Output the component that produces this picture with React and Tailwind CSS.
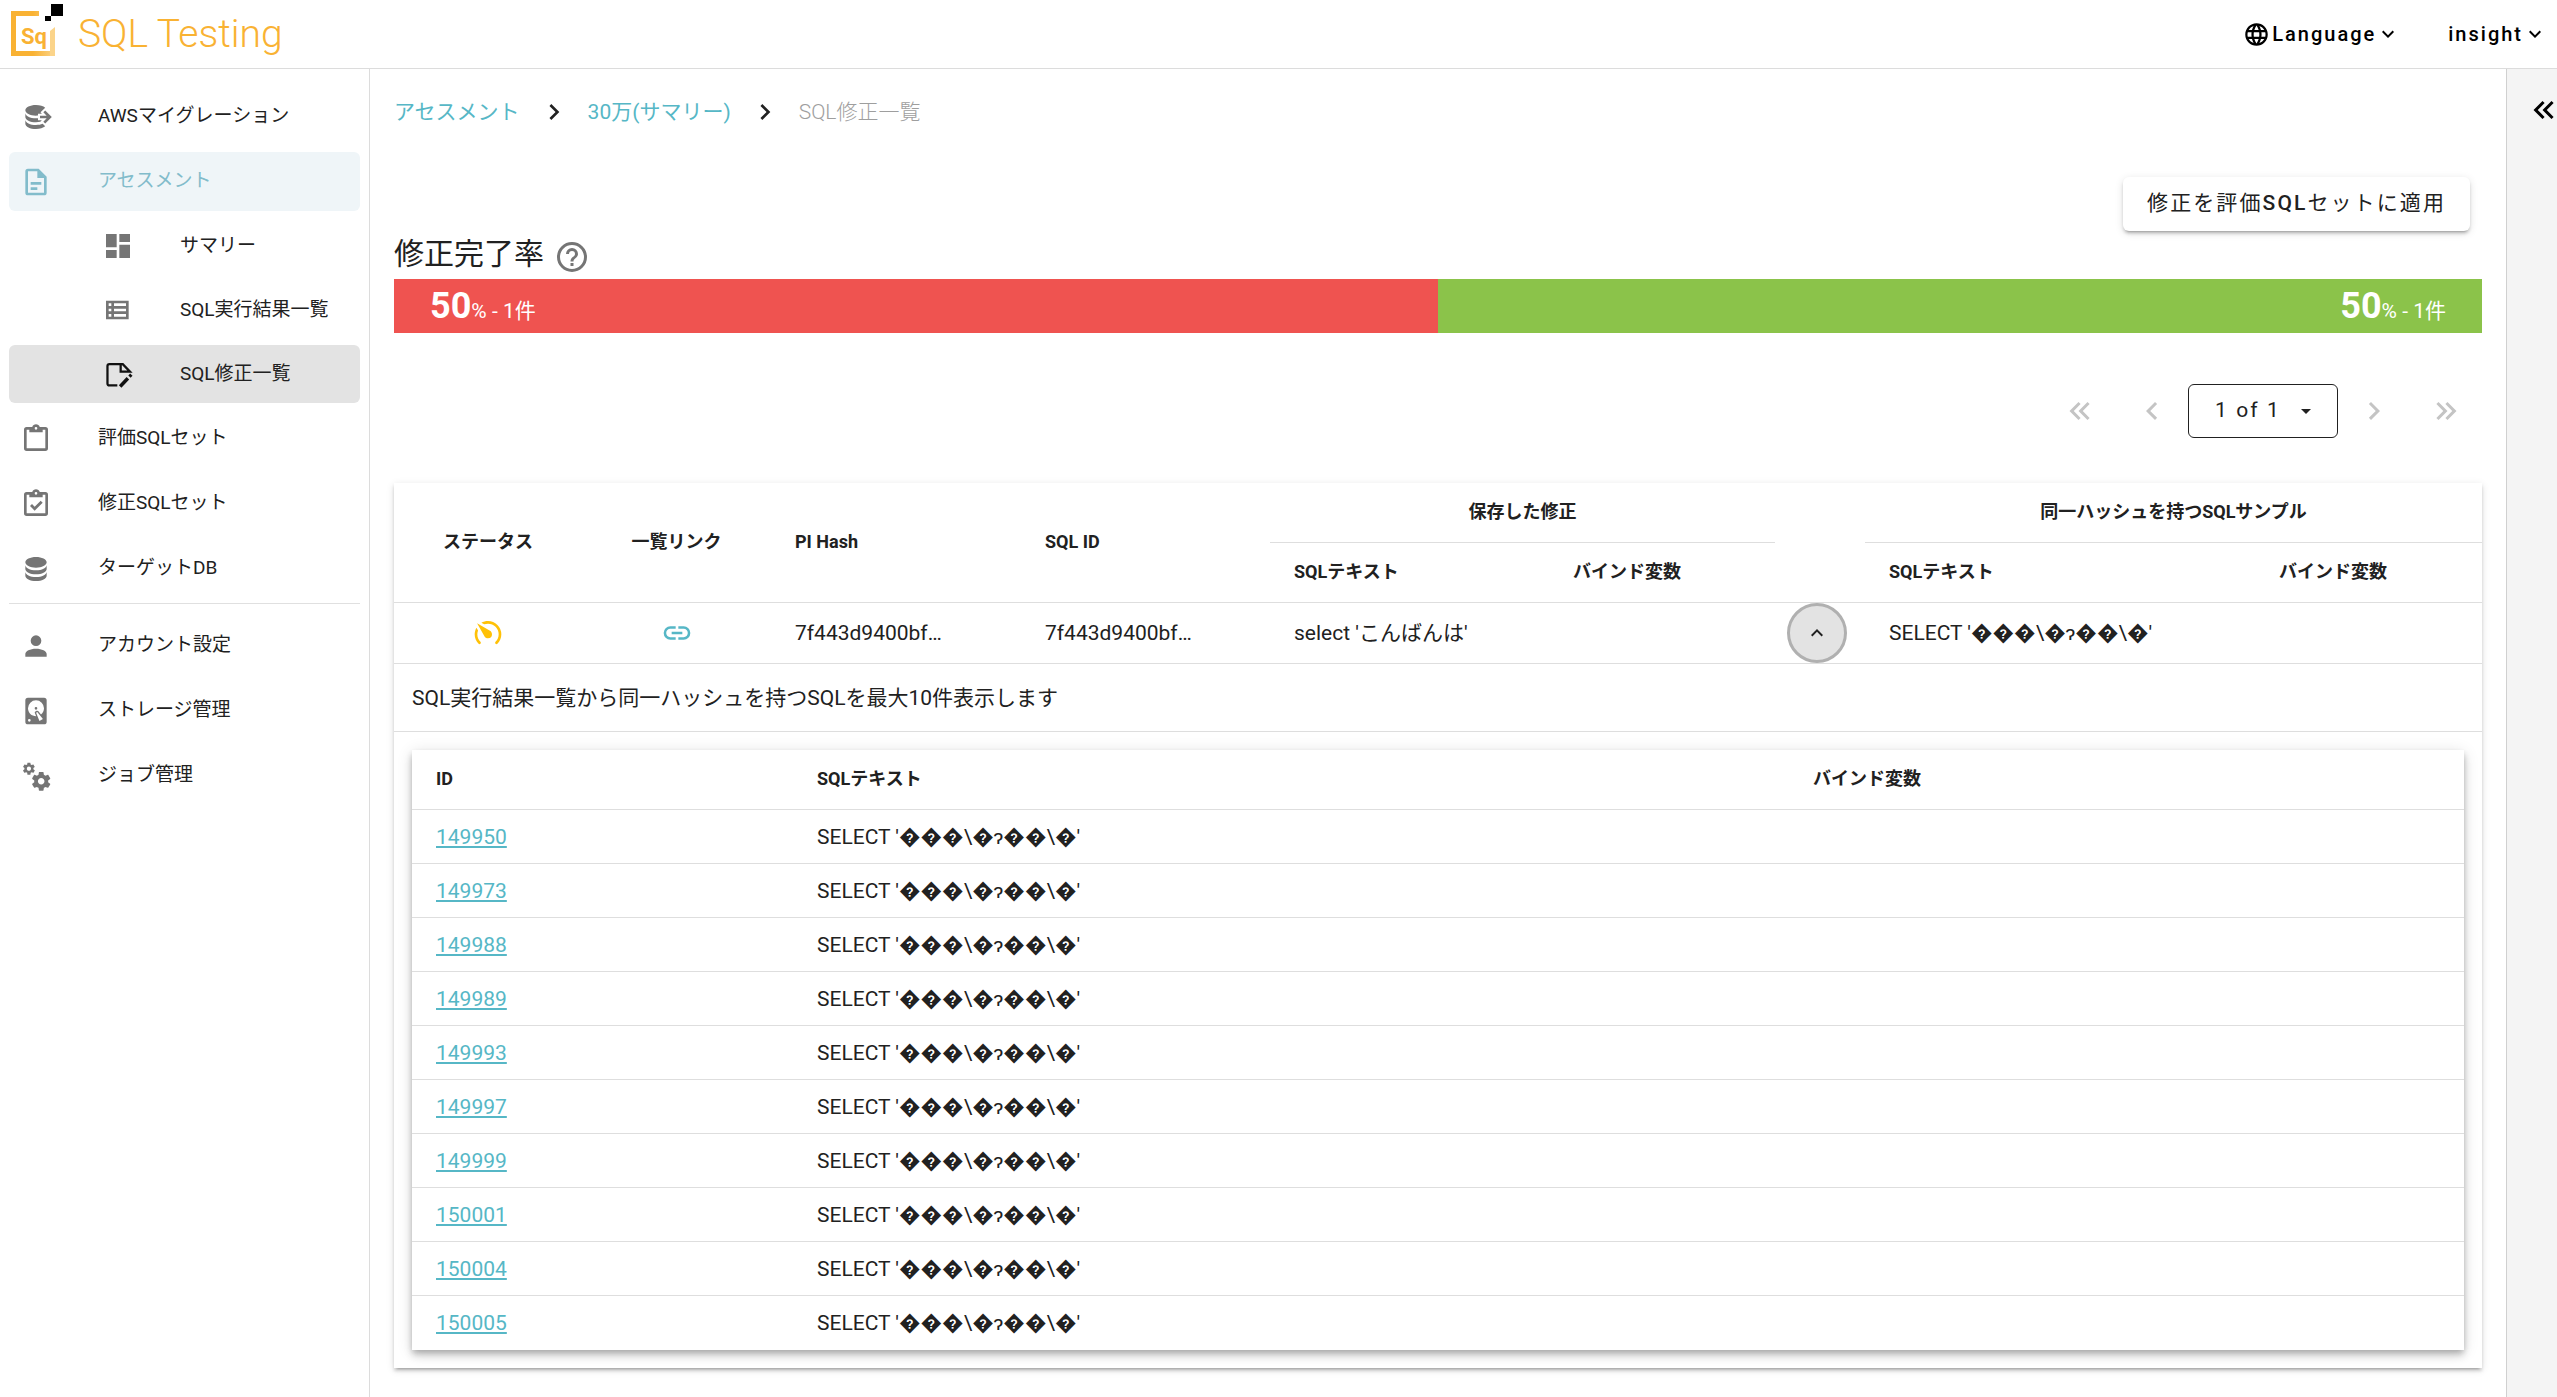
import React from "react";

const PATHS = {
  databaseExport:
    "M12 3C7.58 3 4 4.79 4 7C4 9.21 7.58 11 12 11C12.5 11 13 10.97 13.5 10.92V9.5H16.39L15.39 8.5L18.9 5C17.5 3.8 14.94 3 12 3M18.92 7.08L17.5 8.5L20 11H15V13H20L17.5 15.5L18.92 16.92L23.84 12M4 9V12C4 14.21 7.58 16 12 16C13.17 16 14.26 15.85 15.25 15.63L16.38 14.5H13.5V12.92C13 12.97 12.5 13 12 13C7.58 13 4 11.21 4 9M4 14V17C4 19.21 7.58 21 12 21C14.94 21 17.5 20.2 18.9 19L17 17.1C15.61 17.66 13.9 18 12 18C7.58 18 4 16.21 4 14Z",
  fileDocument:
    "M6,2A2,2 0 0,0 4,4V20A2,2 0 0,0 6,22H18A2,2 0 0,0 20,20V8L14,2H6M6,4H13V9H18V20H6V4M8,12V14H16V12H8M8,16V18H13V16H8Z",
  dashboard: "M13,3V9H21V3M13,21H21V11H13M3,21H11V15H3M3,13H11V3H3V13Z",
  viewList:
    "M3 5V19H20V5H3M7 7V9H5V7H7M5 13V11H7V13H5M5 15H7V17H5V15M18 17H9V15H18V17M18 13H9V11H18V13M18 9H9V7H18V9Z",
  clipboard:
    "M19,3H14.82C14.4,1.84 13.3,1 12,1C10.7,1 9.6,1.84 9.18,3H5A2,2 0 0,0 3,5V19A2,2 0 0,0 5,21H19A2,2 0 0,0 21,19V5A2,2 0 0,0 19,3M12,3A1,1 0 0,1 13,4A1,1 0 0,1 12,5A1,1 0 0,1 11,4A1,1 0 0,1 12,3M7,7H17V5H19V19H5V5H7V7Z",
  clipboardCheck:
    "M19,3H14.82C14.4,1.84 13.3,1 12,1C10.7,1 9.6,1.84 9.18,3H5A2,2 0 0,0 3,5V19A2,2 0 0,0 5,21H19A2,2 0 0,0 21,19V5A2,2 0 0,0 19,3M12,3A1,1 0 0,1 13,4A1,1 0 0,1 12,5A1,1 0 0,1 11,4A1,1 0 0,1 12,3M7,7H17V5H19V19H5V5H7V7M7.5,13.5L9,12L11,14L15.5,9.5L17,11L11,17L7.5,13.5Z",
  database:
    "M12,3C7.58,3 4,4.79 4,7C4,9.21 7.58,11 12,11C16.42,11 20,9.21 20,7C20,4.79 16.42,3 12,3M4,9V12C4,14.21 7.58,16 12,16C16.42,16 20,14.21 20,12V9C20,11.21 16.42,13 12,13C7.58,13 4,11.21 4,9M4,14V17C4,19.21 7.58,21 12,21C16.42,21 20,19.21 20,17V14C20,16.21 16.42,18 12,18C7.58,18 4,16.21 4,14Z",
  account:
    "M12,4A4,4 0 0,1 16,8A4,4 0 0,1 12,12A4,4 0 0,1 8,8A4,4 0 0,1 12,4M12,14C16.42,14 20,15.79 20,18V20H4V18C4,15.79 7.58,14 12,14Z",
  harddisk:
    "M6,2H18A2,2 0 0,1 20,4V20A2,2 0 0,1 18,22H6A2,2 0 0,1 4,20V4A2,2 0 0,1 6,2M12,4A6,6 0 0,0 6,10C6,13.31 8.69,16 12.1,16L11.22,13.77C10.95,13.29 11.11,12.68 11.59,12.4L12.45,11.9C12.93,11.63 13.54,11.79 13.82,12.27L15.74,14.69C17.12,13.59 18,11.9 18,10A6,6 0 0,0 12,4M12,9A1,1 0 0,1 13,10A1,1 0 0,1 12,11A1,1 0 0,1 11,10A1,1 0 0,1 12,9M7,18A1,1 0 0,0 6,19A1,1 0 0,0 7,20A1,1 0 0,0 8,19A1,1 0 0,0 7,18M12.09,13.27L14.58,19.58L17.17,18.08L12.95,12.77L12.09,13.27Z",
  cogs: "M15.9,18.45C17.25,18.45 18.35,17.35 18.35,16C18.35,14.65 17.25,13.55 15.9,13.55C14.54,13.55 13.45,14.65 13.45,16C13.45,17.35 14.54,18.45 15.9,18.45M21.1,16.68L22.58,17.84C22.71,17.95 22.75,18.13 22.66,18.29L21.26,20.71C21.17,20.86 21,20.92 20.83,20.86L19.09,20.16C18.73,20.44 18.33,20.67 17.91,20.85L17.64,22.7C17.62,22.87 17.47,23 17.3,23H14.5C14.32,23 14.18,22.87 14.15,22.7L13.89,20.85C13.46,20.67 13.07,20.44 12.71,20.16L10.96,20.86C10.81,20.92 10.62,20.86 10.54,20.71L9.14,18.29C9.05,18.13 9.09,17.95 9.22,17.84L10.7,16.68L10.65,16L10.7,15.31L9.22,14.16C9.09,14.05 9.05,13.86 9.14,13.71L10.54,11.29C10.62,11.13 10.81,11.07 10.96,11.13L12.71,11.84C13.07,11.56 13.46,11.32 13.89,11.15L14.15,9.29C14.18,9.13 14.32,9 14.5,9H17.3C17.47,9 17.62,9.13 17.64,9.29L17.91,11.15C18.33,11.32 18.73,11.56 19.09,11.84L20.83,11.13C21,11.07 21.17,11.13 21.26,11.29L22.66,13.71C22.75,13.86 22.71,14.05 22.58,14.16L21.1,15.31L21.15,16L21.1,16.68M6.69,8.07C7.56,8.07 8.26,7.37 8.26,6.5C8.26,5.63 7.56,4.92 6.69,4.92A1.58,1.58 0 0,0 5.11,6.5C5.11,7.37 5.82,8.07 6.69,8.07M10.03,6.94L11,7.68C11.07,7.75 11.09,7.87 11.03,7.97L10.13,9.53C10.08,9.63 9.96,9.67 9.86,9.63L8.74,9.18L8,9.62L7.81,10.81C7.79,10.92 7.7,11 7.59,11H5.79C5.67,11 5.58,10.92 5.56,10.81L5.4,9.62L4.64,9.18L3.52,9.63C3.41,9.67 3.3,9.63 3.24,9.53L2.34,7.97C2.28,7.87 2.31,7.75 2.39,7.68L3.34,6.94L3.31,6.5L3.34,6.06L2.39,5.32C2.31,5.25 2.28,5.13 2.34,5.03L3.24,3.47C3.3,3.37 3.41,3.32 3.52,3.36L4.63,3.82L5.4,3.38L5.56,2.19C5.58,2.08 5.67,2 5.79,2H7.59C7.7,2 7.79,2.08 7.81,2.19L8,3.38L8.74,3.82L9.86,3.36C9.96,3.32 10.08,3.37 10.13,3.47L11.03,5.03C11.09,5.13 11.07,5.25 11,5.32L10.03,6.06L10.06,6.5L10.03,6.94Z",
  web: "M16.36,14C16.44,13.34 16.5,12.68 16.5,12C16.5,11.32 16.44,10.66 16.36,10H19.74C19.9,10.64 20,11.31 20,12C20,12.69 19.9,13.36 19.74,14M14.59,19.56C15.19,18.45 15.65,17.25 15.97,16H18.92C17.96,17.65 16.43,18.93 14.59,19.56M14.34,14H9.66C9.56,13.34 9.5,12.68 9.5,12C9.5,11.32 9.56,10.65 9.66,10H14.34C14.43,10.65 14.5,11.32 14.5,12C14.5,12.68 14.43,13.34 14.34,14M12,19.96C11.17,18.76 10.5,17.43 10.09,16H13.91C13.5,17.43 12.83,18.76 12,19.96M8,8H5.08C6.03,6.34 7.57,5.06 9.4,4.44C8.8,5.55 8.35,6.75 8,8M5.08,16H8C8.35,17.25 8.8,18.45 9.4,19.56C7.57,18.93 6.03,17.65 5.08,16M4.26,14C4.1,13.36 4,12.69 4,12C4,11.31 4.1,10.64 4.26,10H7.64C7.56,10.66 7.5,11.32 7.5,12C7.5,12.68 7.56,13.34 7.64,14M12,4.03C12.83,5.23 13.5,6.57 13.91,8H10.09C10.5,6.57 11.17,5.23 12,4.03M18.92,8H15.97C15.65,6.75 15.19,5.55 14.59,4.44C16.43,5.07 17.96,6.34 18.92,8M12,2C6.47,2 2,6.5 2,12A10,10 0 0,0 12,22A10,10 0 0,0 22,12A10,10 0 0,0 12,2Z",
  help: "M11,18H13V16H11V18M12,2A10,10 0 0,0 2,12A10,10 0 0,0 12,22A10,10 0 0,0 22,12A10,10 0 0,0 12,2M12,20C7.59,20 4,16.41 4,12C4,7.59 7.59,4 12,4C16.41,4 20,7.59 20,12C20,16.41 16.41,20 12,20M12,6A4,4 0 0,0 8,10H10A2,2 0 0,1 12,8A2,2 0 0,1 14,10C14,12 11,11.75 11,15H13C13,12.75 16,12.5 16,10A4,4 0 0,0 12,6Z",
  link: "M3.9,12C3.9,10.29 5.29,8.9 7,8.9H11V7H7A5,5 0 0,0 2,12A5,5 0 0,0 7,17H11V15.1H7C5.29,15.1 3.9,13.71 3.9,12M8,13H16V11H8V13M17,7H13V8.9H17C18.71,8.9 20.1,10.29 20.1,12C20.1,13.71 18.71,15.1 17,15.1H13V17H17A5,5 0 0,0 22,12A5,5 0 0,0 17,7Z",
  chevronLeft: "M15.41,16.58L10.83,12L15.41,7.41L14,6L8,12L14,18L15.41,16.58Z",
  chevronRight: "M8.59,16.58L13.17,12L8.59,7.41L10,6L16,12L10,18L8.59,16.58Z",
  chevronDown: "M7.41,8.58L12,13.17L16.59,8.58L18,10L12,16L6,10L7.41,8.58Z",
  chevronUp: "M7.41,15.41L12,10.83L16.59,15.41L18,14L12,8L6,14L7.41,15.41Z",
  doubleLeft:
    "M18.41,7.41L17,6L11,12L17,18L18.41,16.59L13.83,12L18.41,7.41M12.41,7.41L11,6L5,12L11,18L12.41,16.59L7.83,12L12.41,7.41Z",
  doubleRight:
    "M5.59,7.41L7,6L13,12L7,18L5.59,16.59L10.17,12L5.59,7.41M11.59,7.41L13,6L19,12L13,18L11.59,16.59L16.17,12L11.59,7.41Z",
  menuDown: "M7,10L12,15L17,10H7Z",
};

function Icon({ name, className }) {
  return (
    <svg viewBox="0 0 24 24" fill="currentColor" aria-hidden="true" className={className}>
      <path d={PATHS[name]} />
    </svg>
  );
}

function FileEditIcon({ className }) {
  return (
    <svg viewBox="0 0 24 24" fill="none" stroke="currentColor" strokeWidth="1.7" aria-hidden="true" className={className}>
      <path d="M11.5 20.6H5.6C4.7 20.6 4.1 20 4.1 19.1V6C4.1 5.2 4.7 4.6 5.6 4.6H15.6L21 10.3H14V4.6" />
      <path d="M13.6 21.4L19.4 15.2" strokeWidth="2.6" />
      <path d="M20.6 14L22 12.5" strokeWidth="2.4" />
    </svg>
  );
}

function SpeedometerIcon({ className }) {
  return (
    <svg viewBox="0 0 24 24" fill="currentColor" aria-hidden="true" className={className}>
      <path
        transform="matrix(-1 0 0 1 24 0)"
        d="M12,16A3,3 0 0,1 9,13C9,11.88 9.61,10.9 10.5,10.39L20.21,4.77L14.68,14.35C14.18,15.33 13.17,16 12,16M12,3C13.81,3 15.5,3.5 16.97,4.32L14.87,5.53C14,5.19 13,5 12,5A8,8 0 0,0 4,13C4,15.21 4.89,17.21 6.34,18.65H6.35C6.74,19.04 6.74,19.67 6.35,20.06C5.96,20.45 5.32,20.45 4.93,20.07V20.07C3.12,18.26 2,15.76 2,13A10,10 0 0,1 12,3M22,13C22,15.76 20.88,18.26 19.07,20.07V20.07C18.68,20.45 18.05,20.45 17.66,20.06C17.27,19.67 17.27,19.04 17.66,18.65V18.65C19.11,17.2 20,15.21 20,13C20,12 19.81,11 19.46,10.1L20.67,8C21.5,9.5 22,11.18 22,13Z"
      />
    </svg>
  );
}

function Logo() {
  return (
    <a href="#" className="flex items-center gap-[13px] text-[#f9b233]">
      <svg viewBox="0 0 54 54" className="h-[54px] w-[54px]" role="img" aria-label="Sq">
        <defs>
          <linearGradient id="fade" x1="0" y1="0" x2="1" y2="0">
            <stop offset="0.5" stopColor="#f9b233" />
            <stop offset="1" stopColor="#fbd48a" />
          </linearGradient>
        </defs>
        <path d="M0 8H28V13H5V48H44V53H0Z" fill="url(#fade)" />
        <path d="M39 28L44 24V53H39Z" fill="#fbd48a" />
        <text x="10" y="41" fontSize="22" fontWeight="700" fontFamily="Roboto, sans-serif" fill="#f9b233">
          Sq
        </text>
        <rect x="40" y="1" width="12" height="12" fill="#000" />
        <rect x="34" y="13" width="6" height="5" fill="#000" />
      </svg>
      <span className="pt-2 text-[39px] leading-[54px] font-light">SQL Testing</span>
    </a>
  );
}

function NavItem({ icon, label, state }) {
  const tone =
    state === "active" ? "bg-[#eff5f8] text-[#82bccb]" : "text-[#757575]";
  const text = state === "active" ? "text-[#82bccb]" : "text-[#212121]";
  return (
    <li>
      <a href="#" className={"flex h-[59px] items-center rounded-md pl-[11px] " + tone}>
        <Icon name={icon} className="h-8 w-8 shrink-0" />
        <span className={"ml-[46px] text-[19px] " + text}>{label}</span>
      </a>
    </li>
  );
}

function SubItem({ children, label, selected }) {
  return (
    <li>
      <a
        href="#"
        className={
          "flex h-[58px] items-center rounded-md pl-[93px] " +
          (selected ? "bg-[#e3e3e3] text-[#111111]" : "text-[#757575]")
        }
      >
        {children}
        <span className="ml-[46px] text-[19px] text-[#212121]">{label}</span>
      </a>
    </li>
  );
}

function Sidebar() {
  return (
    <nav className="w-[370px] shrink-0 border-r border-[#dcdcdc] px-[9px] py-[18px]">
      <ul className="flex flex-col gap-[6px]">
        <NavItem icon="databaseExport" label="AWSマイグレーション" />
        <NavItem icon="fileDocument" label="アセスメント" state="active" />
        <SubItem label="サマリー">
          <Icon name="dashboard" className="h-8 w-8 shrink-0" />
        </SubItem>
        <SubItem label="SQL実行結果一覧">
          <Icon name="viewList" className="h-8 w-8 shrink-0" />
        </SubItem>
        <SubItem label="SQL修正一覧" selected>
          <FileEditIcon className="h-8 w-8 shrink-0" />
        </SubItem>
        <NavItem icon="clipboard" label="評価SQLセット" />
        <NavItem icon="clipboardCheck" label="修正SQLセット" />
        <NavItem icon="database" label="ターゲットDB" />
      </ul>
      <hr className="mt-[5px] mb-3 border-[#e0e0e0]" />
      <ul className="flex flex-col gap-[6px]">
        <NavItem icon="account" label="アカウント設定" />
        <NavItem icon="harddisk" label="ストレージ管理" />
        <NavItem icon="cogs" label="ジョブ管理" />
      </ul>
    </nav>
  );
}

function Breadcrumb() {
  const separator = (
    <li aria-hidden="true" className="flex w-[68px] justify-center">
      <Icon name="chevronRight" className="h-8 w-8" />
    </li>
  );
  return (
    <ol className="flex items-center text-[21px] leading-8">
      <li><a href="#" className="text-[#56b7c6]">アセスメント</a></li>
      {separator}
      <li><a href="#" className="text-[#56b7c6]">30万(サマリー)</a></li>
      {separator}
      <li className="font-light text-[#9e9e9e]">SQL修正一覧</li>
    </ol>
  );
}

function Pagination() {
  const step = "flex h-[54px] w-[72px] items-center justify-center text-[#c4c4c4]";
  return (
    <div className="mt-[51px] flex items-center justify-end">
      <button type="button" aria-label="最初のページ" className={step}><Icon name="doubleLeft" className="h-9 w-9" /></button>
      <button type="button" aria-label="前のページ" className={step}><Icon name="chevronLeft" className="h-9 w-9" /></button>
      <div className="relative">
        <select
          aria-label="ページ"
          className="h-[54px] w-[150px] appearance-none rounded-md border border-[#212121] bg-white pl-[26px] text-[21px] tracking-widest"
        >
          <option>1 of 1</option>
        </select>
        <Icon name="menuDown" className="pointer-events-none absolute top-[15px] right-5 h-6 w-6" />
      </div>
      <button type="button" aria-label="次のページ" className={step}><Icon name="chevronRight" className="h-9 w-9" /></button>
      <button type="button" aria-label="最後のページ" className={step}><Icon name="doubleRight" className="h-9 w-9" /></button>
    </div>
  );
}

const IDS = ["149950", "149973", "149988", "149989", "149993", "149997", "149999", "150001", "150004", "150005"];
const SAMPLE = "SELECT '\uFFFD\uFFFD\uFFFD\\\uFFFD\u0242\uFFFD\uFFFD\\\uFFFD'";

function SampleTable() {
  return (
    <div className="m-[18px] bg-white shadow-[0_3px_6px_-1px_rgba(0,0,0,0.2),0_6px_8px_rgba(0,0,0,0.14),0_2px_15px_rgba(0,0,0,0.12)]">
      <table className="w-full table-fixed text-left">
        <colgroup>
          <col className="w-[381px]" />
          <col />
          <col className="w-[675px]" />
        </colgroup>
        <thead className="text-[18px]">
          <tr className="h-[60px] border-b border-[#dedede]">
            <th className="px-6">ID</th>
            <th className="px-6">SQLテキスト</th>
            <th className="px-6">バインド変数</th>
          </tr>
        </thead>
        <tbody>
          {IDS.map((id) => (
            <tr key={id} className="h-[54px] border-b border-[#dedede] last:border-b-0">
              <td className="px-6"><a href="#" className="text-[#56b7c6] underline">{id}</a></td>
              <td className="px-6">{SAMPLE}</td>
              <td className="px-6" />
            </tr>
          ))}
        </tbody>
      </table>
    </div>
  );
}

function FixTable() {
  return (
    <div className="mt-[45px] bg-white shadow-[0_4px_2px_-3px_rgba(0,0,0,0.2),0_3px_3px_rgba(0,0,0,0.14),0_2px_8px_rgba(0,0,0,0.12)]">
      <table className="w-full table-fixed text-left text-[21px] leading-8">
        <colgroup>
          <col className="w-[188px]" />
          <col className="w-[189px]" />
          <col className="w-[250px]" />
          <col className="w-[249px]" />
          <col className="w-[279px]" />
          <col className="w-[226px]" />
          <col className="w-[90px]" />
          <col />
          <col className="w-[227px]" />
        </colgroup>
        <thead className="text-[18px]">
          <tr className="h-[59px]">
            <th rowSpan={2} className="border-b border-[#dedede] text-center">ステータス</th>
            <th rowSpan={2} className="border-b border-[#dedede] text-center">一覧リンク</th>
            <th rowSpan={2} className="border-b border-[#dedede] px-6">PI Hash</th>
            <th rowSpan={2} className="border-b border-[#dedede] px-6">SQL ID</th>
            <th colSpan={2} className="border-b border-[#dedede] text-center">保存した修正</th>
            <th rowSpan={2} className="border-b border-[#dedede]" />
            <th colSpan={2} className="border-b border-[#dedede] text-center">同一ハッシュを持つSQLサンプル</th>
          </tr>
          <tr className="h-[60px] border-b border-[#dedede]">
            <th className="px-6">SQLテキスト</th>
            <th className="px-6">バインド変数</th>
            <th className="px-6">SQLテキスト</th>
            <th className="px-6">バインド変数</th>
          </tr>
        </thead>
        <tbody>
          <tr className="h-[61px] border-b border-[#dedede]">
            <td><SpeedometerIcon className="mx-auto h-8 w-8 text-[#ffc107]" /></td>
            <td>
              <a href="#" aria-label="一覧リンク" className="block text-[#56b7c6]">
                <Icon name="link" className="mx-auto h-8 w-8" />
              </a>
            </td>
            <td className="px-6">7f443d9400bf…</td>
            <td className="px-6">7f443d9400bf…</td>
            <td className="px-6">select 'こんばんは'</td>
            <td />
            <td className="pr-[6px]">
              <button
                type="button"
                aria-label="折りたたむ"
                className="mx-auto flex h-[60px] w-[60px] items-center justify-center rounded-full border-3 border-[#b0b0b0] bg-[#e3e3e3]"
              >
                <Icon name="chevronUp" className="h-6 w-6" />
              </button>
            </td>
            <td className="px-6">{SAMPLE}</td>
            <td />
          </tr>
          <tr>
            <td colSpan={9}>
              <p className="border-b border-[#dedede] px-[18px] pt-[18px] pb-[17px]">
                SQL実行結果一覧から同一ハッシュを持つSQLを最大10件表示します
              </p>
              <SampleTable />
            </td>
          </tr>
        </tbody>
      </table>
    </div>
  );
}

function Rate({ percent, count }) {
  return (
    <p className="text-[21px] leading-[54px]">
      <b className="text-[36px]">{percent}</b>% - {count}件
    </p>
  );
}

export default function App() {
  return (
    <div className="flex min-h-screen flex-col bg-white font-['Roboto','Noto_Sans_CJK_JP',sans-serif] text-[#212121]" lang="ja">
      <header className="flex h-[69px] items-center justify-between border-b border-[#dcdcdc] pr-[10px] pb-2 pl-[11px]">
        <Logo />
        <div className="flex items-center gap-12 pt-2 text-[20px] font-medium tracking-widest text-black">
          <button type="button" className="flex items-center">
            <Icon name="web" className="mr-[2px] h-[27px] w-[27px]" />
            Language
            <Icon name="chevronDown" className="h-6 w-6" />
          </button>
          <button type="button" className="flex items-center">
            insight
            <Icon name="chevronDown" className="h-6 w-6" />
          </button>
        </div>
      </header>
      <div className="flex flex-1">
        <Sidebar />
        <main className="min-w-0 flex-1 px-6 pt-[27px] pb-[29px]">
          <Breadcrumb />
          <div className="mt-[49px] mr-3 flex justify-end">
            <button
              type="button"
              className="h-[54px] rounded-md bg-white px-6 text-[21px] tracking-widest shadow-[0_4px_2px_-3px_rgba(0,0,0,0.2),0_3px_3px_rgba(0,0,0,0.14),0_2px_8px_rgba(0,0,0,0.12)]"
            >
              修正を評価<span className="font-medium">SQL</span>セットに適用
            </button>
          </div>
          <div className="mt-2 flex items-center gap-[10px]">
            <h1 className="pb-[6px] text-[30px] leading-[30px]">修正完了率</h1>
            <button type="button" aria-label="ヘルプ" className="text-[#757575]">
              <Icon name="help" className="h-9 w-9" />
            </button>
          </div>
          <div className="mt-1 flex h-[54px] text-white">
            <div className="flex-1 bg-[#ef5350] px-9"><Rate percent={50} count={1} /></div>
            <div className="flex flex-1 justify-end bg-[#8bc34a] px-9"><Rate percent={50} count={1} /></div>
          </div>
          <Pagination />
          <FixTable />
        </main>
        <aside className="w-[51px] shrink-0 overflow-hidden border-l border-[#d0d0d0] bg-[#f4f4f4] pt-[23px] pl-[19px]">
          <button type="button" aria-label="パネルを開く" className="text-black">
            <Icon name="doubleLeft" className="h-9 w-9 max-w-none" />
          </button>
        </aside>
      </div>
    </div>
  );
}
